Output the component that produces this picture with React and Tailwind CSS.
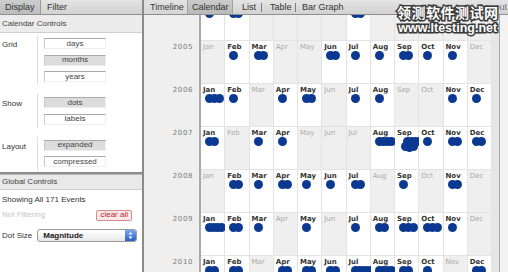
import React from "react";

const MONTHS = ["Jan","Feb","Mar","Apr","May","Jun","Jul","Aug","Sep","Oct","Nov","Dec"];

const line = (n) => {
  const step = n >= 4 ? 4 : 5;
  return Array.from({ length: n }, (_, i) => [i * step, 0]);
};
const BLOB = [[2,5],[6,6],[10,5],[4,0],[8,0],[12,0],[16,0],[20,1]];

const TOP = [1,2,0,0,0,0,2,0,0,0,0,0];

const DATA = [
  { year: 2005, c: [0,1,2,0,0,2,1,1,2,1,1,0] },
  { year: 2006, c: [3,1,0,1,2,0,1,1,0,0,1,1] },
  { year: 2007, c: [2,0,1,1,0,0,0,4,"blob",1,2,2] },
  { year: 2008, c: [0,2,1,2,1,1,2,0,1,0,2,0] },
  { year: 2009, c: [4,2,1,0,1,0,1,2,3,3,1,0] },
  { year: 2010, c: [2,2,0,2,2,2,5,4,2,1,0,2] },
];

function Dots({ count, top }) {
  const dots = count === "blob" ? BLOB : line(count);
  return dots.map(([dx, dy], i) => (
    <span
      key={i}
      className="absolute w-[9px] h-[9px] rounded-full bg-[#0b3891]"
      style={{ left: 4 + dx, top: top + dy }}
    />
  ));
}

function Cell({ month, count }) {
  const has = count !== 0;
  return (
    <div className={`relative h-[43px] border-r border-b border-[#e3e3e3] ${has ? "bg-white" : "bg-[#efefef]"}`}>
      <div className={`pl-[2px] pt-[2px] text-[7px] leading-[9px] whitespace-nowrap ${has ? "font-bold text-[#333]" : "text-[#a8a8a8]"}`}>{month}</div>
      <Dots count={count} top={10} />
    </div>
  );
}

function Filler() {
  return (
    <>
      <div className="w-[8px] shrink-0 bg-[#e6e6e6] border-r border-[#a8a8a8]" />
      <div className="flex-1 bg-[#f3f3f3]" />
    </>
  );
}

function PartialRow({ c }) {
  return (
    <div className="flex h-[26px]">
      <div className="w-[57px] shrink-0 bg-[#efefef] border-r-2 border-[#a9a9a9]" />
      <div className="grid grid-cols-12 w-[291px] shrink-0">
        {c.map((n, i) => (
          <div key={i} className={`relative overflow-hidden border-r border-b border-[#e3e3e3] ${n ? "bg-white" : "bg-[#efefef]"}`}>
            <Dots count={n} top={-6} />
          </div>
        ))}
      </div>
      <Filler />
    </div>
  );
}

function YearRow({ year, c }) {
  return (
    <div className="flex">
      <div className="w-[57px] h-[43px] shrink-0 bg-[#efefef] border-r-2 border-[#a9a9a9] text-right pr-[6px] pt-[2px] text-[7px] leading-[9px] tracking-[0.6px] text-[#7a7a7a]">
        {year}
      </div>
      <div className="grid grid-cols-12 w-[291px] shrink-0">
        {MONTHS.map((m, i) => (
          <Cell key={m} month={m} count={c[i]} />
        ))}
      </div>
      <Filler />
    </div>
  );
}

function ToggleBtn({ children, on }) {
  return (
    <div
      className={`w-[62px] h-[11px] flex items-center justify-center text-[8px] leading-none text-[#444] border border-t-[#a9a9a9] border-l-[#c9c9c9] border-r-[#eeeeee] border-b-[#eeeeee] ${on ? "bg-[#dcdcdc]" : "bg-white"}`}
    >
      {children}
    </div>
  );
}

function Group({ label, items }) {
  return (
    <div className="flex">
      <div className="w-[38px] shrink-0 border-r border-[#dedede] pl-[2px] pt-[5px] text-[8px] leading-[10px] text-[#333]">
        {label}
      </div>
      <div className="flex flex-col gap-[5.5px] pl-[6px] py-[3px]">
        {items.map(([t, on]) => (
          <ToggleBtn key={t} on={on}>{t}</ToggleBtn>
        ))}
      </div>
    </div>
  );
}

function Sep() {
  return <span className="w-px h-[9px] shrink-0 bg-[#7a7a7a]" />;
}

export default function App() {
  return (
    <div className="relative w-[508px] h-[272px] flex overflow-hidden bg-white font-['Liberation_Sans',Arial,sans-serif]">
      {/* Left panel */}
      <aside className="w-[144px] shrink-0 h-full border-r-2 border-[#8b8b8b] flex flex-col">
        <div className="h-[15px] shrink-0 flex bg-gradient-to-b from-[#e4e4e4] to-[#d2d2d2] border-b border-[#8f8f8f] text-[9px] leading-[14px] text-[#333] whitespace-nowrap">
          <div className="w-[41px] shrink-0 pl-[5px] bg-gradient-to-b from-[#cdcdcd] to-[#bcbcbc] border-r border-[#9a9a9a]">Display</div>
          <div className="pl-[6px] shrink-0">Filter</div>
        </div>
        <div className="h-[18px] shrink-0 flex items-center pl-[2px] bg-[#ececec] border-b border-[#cfcfcf] text-[8px] text-[#444]">
          Calendar Controls
        </div>
        <div className="flex flex-col gap-[9px] pt-[2px]">
          <Group label="Grid" items={[["days", false], ["months", true], ["years", false]]} />
          <Group label="Show" items={[["dots", true], ["labels", false]]} />
          <Group label="Layout" items={[["expanded", true], ["compressed", false]]} />
        </div>
        <div className="mt-[2px] h-[3px] shrink-0 bg-[#8c8c8c] border-b border-[#b9b9b9]" />
        <div className="h-[15px] shrink-0 flex items-center pl-[2px] bg-[#e9e9e9] border-b border-[#cfcfcf] text-[8px] text-[#444]">
          Global Controls
        </div>
        <div className="pl-[2px] pt-[5px] text-[8px] leading-[10px] text-[#333]">Showing All 171 Events</div>
        <div className="flex items-center justify-between pl-[2px] pr-[10px] mt-[4px]">
          <span className="text-[8px] text-[#c4c4c4]">Not Filtering</span>
          <span className="h-[11px] px-[3px] flex items-center rounded-[2px] border border-[#d98b8b] bg-[#fbe9ea] text-[8px] text-[#c0262d]">clear all</span>
        </div>
        <div className="flex items-center pl-[2px] mt-[8px] gap-[5px]">
          <span className="text-[8px] text-[#333]">Dot Size</span>
          <div className="w-[100px] h-[13px] flex items-center justify-between rounded-[3px] border border-[#9a9a9a] bg-gradient-to-b from-white to-[#e9e9e9] overflow-hidden">
            <span className="pl-[5px] text-[8px] font-bold text-[#222]">Magnitude</span>
            <span className="w-[11px] h-full flex items-center justify-center bg-gradient-to-b from-[#7aa8ee] to-[#2a5fc4]">
              <svg width="5" height="9" viewBox="0 0 5 9">
                <path d="M0.5 3.5 L2.5 1 L4.5 3.5 Z M0.5 5.5 L2.5 8 L4.5 5.5 Z" fill="#ffffff" />
              </svg>
            </span>
          </div>
        </div>
      </aside>

      {/* Right side */}
      <main className="flex-1 h-full flex flex-col overflow-hidden">
        <div className="h-[15px] shrink-0 flex items-center bg-gradient-to-b from-[#e4e4e4] to-[#d2d2d2] border-b border-[#8f8f8f] text-[9px] leading-[14px] text-[#333] whitespace-nowrap">
          <div className="w-[44px] h-full shrink-0 pl-[6px] bg-gradient-to-b from-[#e2e2e2] to-[#d6d6d6] border-r border-[#9f9f9f]">Timeline</div>
          <div className="w-[45px] h-full shrink-0 pl-[4px] bg-gradient-to-b from-[#cbcbcb] to-[#b9b9b9] border-r border-[#9f9f9f]">Calendar</div>
          <div className="w-[28px] shrink-0 pl-[9px]">List</div>
          <Sep />
          <div className="w-[33px] shrink-0 pl-[8px]">Table</div>
          <Sep />
          <div className="shrink-0 pl-[6px]">Bar Graph</div>
          <div className="ml-auto shrink-0 pr-[1px] text-[#777]">Layout</div>
        </div>
        <div className="flex-1 overflow-hidden font-['DejaVu_Sans',Verdana,sans-serif]">
          <PartialRow c={TOP} />
          {DATA.map((d) => (
            <YearRow key={d.year} year={d.year} c={d.c} />
          ))}
        </div>
      </main>

      {/* Watermark */}
      <div className="absolute left-[397px] top-[3px] flex flex-col items-center font-['Noto_Sans_CJK_SC',sans-serif] font-bold text-white [-webkit-text-stroke:3px_#3b3b3b] [paint-order:stroke_fill] pointer-events-none">
        <div className="text-[14px] leading-[18px] tracking-[0.5px]">领测软件测试网</div>
        <div className="text-[12.5px] leading-[15px] font-['Liberation_Sans',sans-serif]">www.ltesting.net</div>
      </div>
    </div>
  );
}
